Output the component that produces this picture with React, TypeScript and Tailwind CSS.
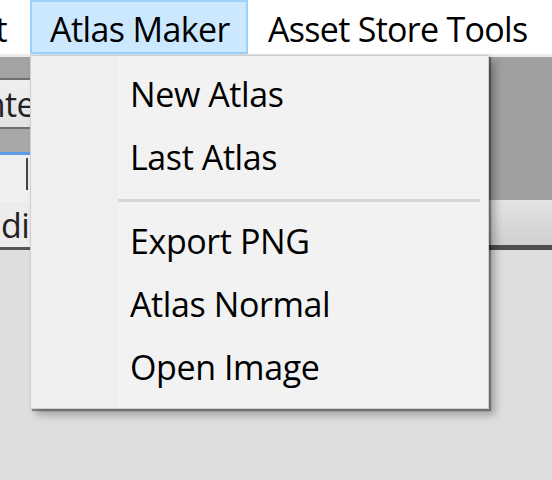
import React from "react";

const items1 = ["New Atlas", "Last Atlas"];
const items2 = ["Export PNG", "Atlas Normal", "Open Image"];

function Item({ label }: { label: string }) {
  return (
    <div className="h-[63px] flex items-center pl-[12px] pb-[4px] tracking-[-0.4px] text-black whitespace-nowrap">
      {label}
    </div>
  );
}

export default function App() {
  return (
    <div className="relative w-[552px] h-[480px] overflow-hidden bg-[#dedede] font-['Open_Sans',sans-serif] text-[34px] leading-none tracking-[-0.6px] text-black">
      {/* Menu bar */}
      <div className="flex h-[54px] bg-white">
        <div className="w-[30px] flex items-center justify-end pr-[23px] pt-[4px] whitespace-nowrap">t</div>
        <div className="w-[218px] flex items-center pl-[18px] pt-[4px] bg-[#cce8ff] border-2 border-[#99d1ff] whitespace-nowrap">
          Atlas Maker
        </div>
        <div className="flex items-center pl-[20px] pt-[4px] tracking-[-0.7px] whitespace-nowrap">Asset Store Tools</div>
      </div>

      {/* Editor strip underneath */}
      <div className="flex h-[196px]">
        <div className="w-[31px] flex flex-col overflow-hidden">
          <div className="h-[3px] bg-[#ececec]" />
          <div className="h-[21px] bg-[#a3a3a3]" />
          <div className="h-[2px] bg-[#707070]" />
          <div className="h-[47px] bg-gradient-to-b from-[#f0f0f0] to-[#e2e2e2] flex items-center justify-end text-[#222] whitespace-nowrap">
            <span className="mr-[-4px]">nte</span>
          </div>
          <div className="h-[2px] bg-[#6f6f6f]" />
          <div className="h-[23px] bg-[#a8a8a8]" />
          <div className="h-[3px] bg-[#5b9be8]" />
          <div className="h-[47px] bg-[#f0f0f0] flex items-start justify-end pr-[3px] pt-[3px]">
            <div className="w-[2px] h-[32px] bg-[#444]" />
          </div>
          <div className="h-[45px] bg-[#ececec] flex items-center text-[#222] whitespace-nowrap pl-[1px]">
            di<span className="text-[#999]">:</span>
          </div>
          <div className="h-[3px] bg-[#555]" />
        </div>
        <div className="flex-1" />
        <div className="w-[64px] flex flex-col">
          <div className="h-[3px] bg-[#ececec]" />
          <div className="h-[143px] bg-[#a0a0a0]" />
          <div className="h-[45px] bg-gradient-to-b from-[#e4e4e4] to-[#cfcfcf]" />
          <div className="h-[5px] bg-[#4d4d4d]" />
        </div>
      </div>

      {/* Dropdown menu */}
      <div className="absolute left-[30px] top-[55px] w-[459px] h-[354px] bg-[#f2f2f2] border border-[#cfcfcf] shadow-[2px_2px_1px_rgba(0,0,0,0.35),6px_6px_8px_rgba(0,0,0,0.28)] flex">
        <div className="w-[87px] bg-[#efefef]" />
        <div className="flex-1 flex flex-col pt-[8px] pr-[8px]">
          {items1.map((l) => (
            <Item key={l} label={l} />
          ))}
          <div className="h-[21px] pt-[9px]">
            <div className="h-[3px] bg-[#d7d7d7]" />
          </div>
          {items2.map((l) => (
            <Item key={l} label={l} />
          ))}
        </div>
      </div>
    </div>
  );
}
